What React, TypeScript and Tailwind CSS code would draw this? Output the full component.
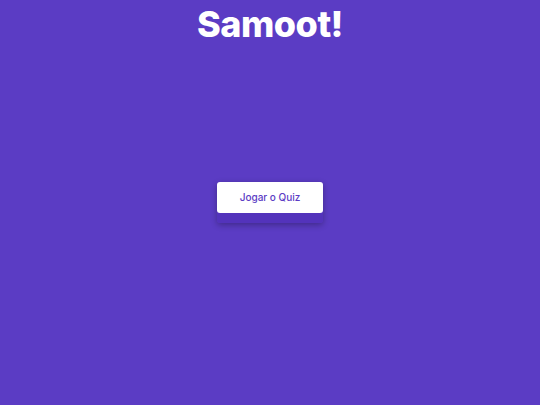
export default function App() {
  return (
    <div className="h-screen w-full bg-[#5b3cc4] flex flex-col items-center font-['Inter','Liberation_Sans',sans-serif]">
      <h1 className="h-12 flex items-center text-white text-[36px] font-extrabold tracking-[-0.5px] leading-none">
        Samoot!
      </h1>
      <div className="flex-1 flex items-center justify-center pb-12">
        <div className="flex flex-col w-[106px] rounded-[3px] shadow-[0_2px_6px_rgba(0,0,0,0.3)]">
          <button className="h-[31px] w-full bg-white rounded-[3px] text-[#5b3cc4] text-[10px] font-medium">
            Jogar o Quiz
          </button>
          <div className="h-[10px] bg-[#5333bb] rounded-b-[3px]" />
        </div>
      </div>
    </div>
  );
}
